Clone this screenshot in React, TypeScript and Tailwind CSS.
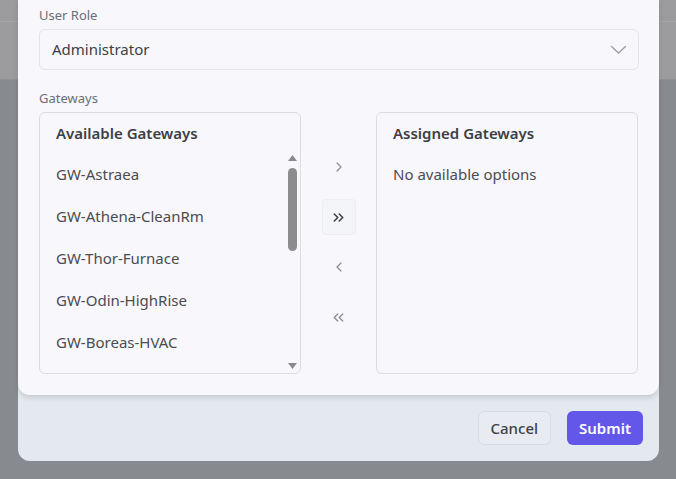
import React from 'react';
import { ChevronRight, ChevronsRight, ChevronLeft, ChevronsLeft } from 'lucide-react';

const available = ['GW-Astraea', 'GW-Athena-CleanRm', 'GW-Thor-Furnace', 'GW-Odin-HighRise', 'GW-Boreas-HVAC'];

const MoveButton: React.FC<{ active?: boolean; children: React.ReactNode }> = ({ active, children }) => (
    <button
        className={
            active
                ? 'flex h-[36px] w-[34px] items-center justify-center rounded-sm border border-[#eceef3] bg-[#f4f5f9] text-[#3f4147]'
                : 'flex h-[36px] w-[34px] items-center justify-center rounded-sm text-[#8a8c92]'
        }
    >
        {children}
    </button>
);

export default function App() {
    return (
        <div className="relative h-[479px] w-[676px] overflow-hidden bg-[#878a8f] font-['Noto_Sans',sans-serif]">
            {/* page behind the overlay */}
            <div className="h-[80px] border-b border-[#8f9195] bg-[#9c9c9e]">
                <div className="h-[22px] border-b border-[#a6a6a8]" />
            </div>

            {/* dialog */}
            <div className="absolute bottom-[18px] left-[18px] w-[641px] rounded-b-xl bg-[#e4e8ef]">
                <div className="rounded-b-xl bg-[#f8f7fb] px-[21px] pt-[6px] pb-[21px] shadow-[0_3px_5px_rgba(0,0,0,0.12)]">
                    <div className="text-[13px] leading-[20px] text-[#6b6e75]">User Role</div>
                    <div className="mt-[4px] flex h-[41px] w-[600px] items-center justify-between rounded-md border border-[#e4e5ea] bg-[#f8f7fb] pl-[12px] pr-[11px]">
                        <span className="text-[15px] text-[#3d3f45]">Administrator</span>
                        <svg width="17" height="10" viewBox="0 0 17 10" fill="none">
                            <polyline points="1.5,1.5 8.5,8 15.5,1.5" stroke="#9a9ca3" strokeWidth="1.3" strokeLinecap="round" strokeLinejoin="round" />
                        </svg>
                    </div>

                    <div className="mt-[18px] text-[13px] leading-[20px] text-[#6b6e75]">Gateways</div>
                    <div className="mt-[4px] flex h-[262px] items-stretch">
                        {/* available list */}
                        <div className="flex w-[262px] flex-col overflow-hidden rounded-md border border-[#dcdde2] bg-[#f8f7fb]">
                            <div className="flex h-[40px] shrink-0 items-center pl-[16px] pt-[1px] text-[15px] font-semibold text-[#3d3f45]">
                                Available Gateways
                            </div>
                            <div className="flex min-h-0 flex-1">
                                <div className="flex-1 overflow-hidden">
                                    {available.map((g) => (
                                        <div key={g} className="flex h-[42px] items-center pl-[16px] text-[15px] text-[#4a4c52]">
                                            {g}
                                        </div>
                                    ))}
                                </div>
                                <div className="mr-[2px] flex w-[11px] flex-col items-center pt-[2px] pb-[4px]">
                                    <svg width="9" height="6" viewBox="0 0 9 6">
                                        <polygon points="4.5,0 9,6 0,6" fill="#8a8a8c" />
                                    </svg>
                                    <div className="mt-[7px] h-[83px] w-[9px] rounded-full bg-[#8c8c8e]" />
                                    <div className="flex-1" />
                                    <svg width="9" height="6" viewBox="0 0 9 6">
                                        <polygon points="0,0 9,0 4.5,6" fill="#8a8a8c" />
                                    </svg>
                                </div>
                            </div>
                        </div>

                        {/* move buttons */}
                        <div className="flex flex-1 flex-col items-center gap-[14px] pt-[37px]">
                            <MoveButton>
                                <ChevronRight size={16} strokeWidth={1.8} />
                            </MoveButton>
                            <MoveButton active>
                                <ChevronsRight size={17} strokeWidth={2.2} />
                            </MoveButton>
                            <MoveButton>
                                <ChevronLeft size={16} strokeWidth={1.8} />
                            </MoveButton>
                            <MoveButton>
                                <ChevronsLeft size={17} strokeWidth={1.8} />
                            </MoveButton>
                        </div>

                        {/* assigned list */}
                        <div className="flex w-[262px] flex-col rounded-md border border-[#dcdde2] bg-[#f8f7fb]">
                            <div className="flex h-[40px] items-center pl-[16px] pt-[1px] text-[15px] font-semibold text-[#3d3f45]">
                                Assigned Gateways
                            </div>
                            <div className="flex h-[42px] items-center pl-[16px] text-[15px] text-[#4a4c52]">
                                No available options
                            </div>
                        </div>
                    </div>
                </div>

                <div className="flex h-[66px] items-center justify-end gap-[16px] pr-[16px]">
                    <button className="h-[34px] rounded-md border border-[#d8dce4] bg-[#e8ebf1] px-[12px] text-[15px] font-medium text-[#3f4147]">
                        Cancel
                    </button>
                    <button className="h-[34px] rounded-md bg-[#6257e8] px-[12px] text-[15px] font-semibold text-white">
                        Submit
                    </button>
                </div>
            </div>
        </div>
    );
}
